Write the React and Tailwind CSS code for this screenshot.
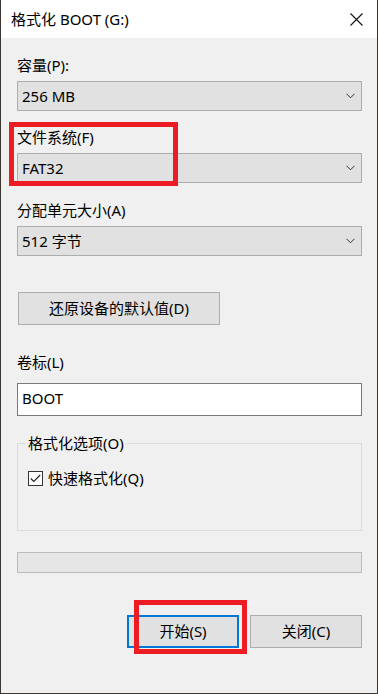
import React from "react";

const font = { fontFamily: '"Noto Sans", "Noto Sans CJK SC", sans-serif' };

function Chevron() {
  return (
    <svg width="9" height="6" viewBox="0 0 9 6" className="shrink-0">
      <path d="M0.5 0.8 L4.5 4.8 L8.5 0.8" fill="none" stroke="#333" strokeWidth="1" />
    </svg>
  );
}

function Combo({ value }) {
  return (
    <div className="flex h-[30px] items-center justify-between border border-[#adadad] bg-[#e1e1e1] pl-[4px] pr-[6px]">
      <span className="text-[15px] leading-none text-black">{value}</span>
      <Chevron />
    </div>
  );
}

function Label({ children, className = "" }) {
  return <div className={`h-[20px] text-[15px] leading-[20px] text-black ${className}`}>{children}</div>;
}

export default function App() {
  return (
    <div className="w-[378px] h-[694px] bg-[#3a3530] pl-px pr-px pb-px" style={font}>
      <div className="relative flex h-[693px] flex-col bg-[#f0f0f0]">
        {/* Title bar */}
        <div className="flex h-[38px] shrink-0 items-center justify-between bg-white pl-[10px] pr-[14px]">
          <span className="text-[15px] leading-none text-black">格式化 BOOT (G:)</span>
          <svg width="13" height="13" viewBox="0 0 13 13">
            <path d="M0.5 0.5 L12.5 12.5 M12.5 0.5 L0.5 12.5" stroke="#111" strokeWidth="1.1" />
          </svg>
        </div>

        <div className="flex flex-col pl-[16px] pr-[15px]">
          <Label className="mt-[17px]">容量(P):</Label>
          <div className="mt-[6px]"><Combo value="256 MB" /></div>

          <Label className="mt-[16px]">文件系统(F)</Label>
          <div className="mt-[6px]"><Combo value="FAT32" /></div>

          <Label className="mt-[17px]">分配单元大小(A)</Label>
          <div className="mt-[6px]"><Combo value="512 字节" /></div>

          <div className="mt-[36px] flex h-[33px] w-[202px] items-center justify-center border border-[#adadad] bg-[#e1e1e1] ml-px">
            <span className="text-[15px] leading-none text-black">还原设备的默认值(D)</span>
          </div>

          <Label className="mt-[27px]">卷标(L)</Label>
          <div className="mt-[11px] flex h-[33px] items-center border border-[#7a7a7a] bg-white pl-[4px] pb-[3px]">
            <span className="text-[15px] leading-none text-black">BOOT</span>
          </div>

          <div className="relative mt-[27px] h-[88px] border border-[#dcdcdc]">
            <span className="absolute left-[8px] top-[-11px] bg-[#f0f0f0] px-[2px] text-[15px] leading-[20px] text-black">
              格式化选项(O)
            </span>
            <div className="ml-[10px] mt-[24px] flex items-center gap-[5px]">
              <div className="flex h-[15px] w-[15px] items-center justify-center border border-[#333] bg-white">
                <svg width="11" height="9" viewBox="0 0 11 9">
                  <path d="M0.8 4.5 L3.8 7.5 L10.2 1" fill="none" stroke="#222" strokeWidth="1.1" />
                </svg>
              </div>
              <span className="text-[15px] leading-[20px] text-black">快速格式化(Q)</span>
            </div>
          </div>

          <div className="mt-[21px] h-[21px] border border-[#bcbcbc] bg-[#e6e6e6]" />

          <div className="mt-[42px] flex justify-end gap-[11px]">
            <div className="flex h-[33px] w-[112px] items-center justify-center border-2 border-[#0078d7] bg-[#e1e1e1]">
              <span className="text-[15px] leading-none text-black">开始(S)</span>
            </div>
            <div className="flex h-[33px] w-[112px] items-center justify-center border border-[#adadad] bg-[#e1e1e1]">
              <span className="text-[15px] leading-none text-black">关闭(C)</span>
            </div>
          </div>
        </div>

        {/* Red annotation boxes */}
        <div className="pointer-events-none absolute left-[8px] top-[122px] h-[64px] w-[169px] border-[5px] border-[#ed1c24]" />
        <div className="pointer-events-none absolute left-[133px] top-[600px] h-[54px] w-[113px] border-[5px] border-[#ed1c24]" />
      </div>
    </div>
  );
}
